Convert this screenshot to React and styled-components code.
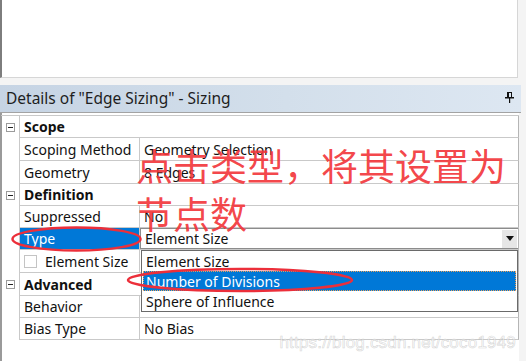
import React from "react";
import styled, { createGlobalStyle } from "styled-components";

const Global = createGlobalStyle`
  html, body { margin: 0; padding: 0; background: #f4f4f4; }
  body { font-family: "Noto Sans", "Open Sans", sans-serif; }
`;

const Page = styled.div`
  position: relative;
  width: 526px;
  height: 361px;
  overflow: hidden;
  background: #f4f4f4;
`;

const TopPane = styled.div`
  width: 515px;
  height: 77px;
  background: #fff;
  border-left: 2px solid #7d7d7d;
  border-right: 1px solid #d6d6d6;
  border-bottom: 1px solid #d6d6d6;
`;

const Gap = styled.div`
  height: 7px;
`;

const Header = styled.div`
  width: 521px;
  height: 28px;
  box-sizing: border-box;
  display: flex;
  align-items: center;
  justify-content: space-between;
  padding: 0 7px 2px 6px;
  background: linear-gradient(90deg, #c6d4e4 0%, #d3dfeb 55%, #dde7f2 100%);
  border-bottom: 1px solid #a3a3a3;
  font-size: 15.5px;
  color: #1e1e1e;
`;

const Body = styled.div`
  width: 519px;
  height: 248px;
  box-sizing: border-box;
  background: #fff;
  border-left: 2px solid #9a9a9a;
  padding-top: 2px;
`;

const Table = styled.div`
  border-top: 1px solid #c9c9c9;
  margin-left: -1px;
`;

const Row = styled.div`
  display: grid;
  grid-template-columns: 18px 120px 1fr;
  height: ${(p) => p.$h}px;
  font-size: 14px;
  color: #111;
`;

const Expander = styled.div`
  display: flex;
  align-items: center;
  padding-left: 5px;
`;

const MinusBox = styled.div`
  width: 9px;
  height: 9px;
  box-sizing: border-box;
  border: 1px solid #9b9b9b;
  display: flex;
  align-items: center;
  justify-content: center;
  &::after {
    content: "";
    width: 5px;
    height: 1px;
    background: #222;
  }
`;

const Cell = styled.div`
  display: flex;
  align-items: center;
  box-sizing: border-box;
  padding-left: 4px;
  border-left: 1px solid #c9c9c9;
  border-bottom: 1px solid #c9c9c9;
  white-space: nowrap;
  overflow: hidden;
  background: ${(p) => (p.$sel ? "#0078d7" : "#fff")};
  color: ${(p) => (p.$sel ? "#fff" : "#111")};
`;

const ValueCell = styled(Cell)`
  border-right: 1px solid #b5b5b5;
`;

const GroupCell = styled(Cell)`
  grid-column: 2 / 4;
  font-weight: 700;
  border-right: 1px solid #b5b5b5;
`;

const CheckBox = styled.span`
  width: 13px;
  height: 13px;
  box-sizing: border-box;
  border: 1px solid #c4c4c4;
  background: #fff;
  margin-right: 8px;
`;

const Combo = styled.div`
  flex: 1;
  height: 100%;
  display: flex;
  align-items: center;
  justify-content: space-between;
  box-sizing: border-box;
  border: 1px solid #8c8c8c;
  border-right: none;
  padding-left: 4px;
  margin-left: -4px;
`;

const ArrowBtn = styled.div`
  width: 15px;
  height: 18px;
  background: #e6e6e6;
  display: flex;
  align-items: center;
  justify-content: center;
  margin-right: 1px;
  &::after {
    content: "";
    border-left: 4px solid transparent;
    border-right: 4px solid transparent;
    border-top: 5px solid #111;
  }
`;

const DropList = styled.div`
  position: absolute;
  left: 141px;
  top: 250px;
  width: 377px;
  box-sizing: border-box;
  border: 1px solid #6a6a6a;
  background: #fff;
  padding: 0 1px;
  font-size: 14px;
`;

const DropItem = styled.div`
  height: 20px;
  display: flex;
  align-items: center;
  padding-left: 2px;
  box-sizing: border-box;
  color: ${(p) => (p.$active ? "#fff" : "#111")};
  background: ${(p) => (p.$active ? "#0078d7" : "#fff")};
  border: 1px dotted ${(p) => (p.$active ? "#e9a15c" : "transparent")};
`;

const Annotation = styled.div`
  position: absolute;
  left: 136px;
  top: 141px;
  font-family: "Noto Sans CJK SC", sans-serif;
  font-size: 37px;
  line-height: 48px;
  color: rgba(242, 54, 58, 0.92);
  pointer-events: none;
`;

const Overlay = styled.svg`
  position: absolute;
  left: 0;
  top: 0;
  pointer-events: none;
`;

const Watermark = styled.div`
  position: absolute;
  right: 10px;
  top: 333px;
  font-family: "Liberation Sans", sans-serif;
  font-size: 17px;
  color: rgba(255, 255, 255, 0.6);
  -webkit-text-stroke: 0.6px rgba(170, 170, 170, 0.5);
  letter-spacing: 0.2px;
`;

const Pin = () => (
  <svg width="9" height="11" viewBox="0 0 9 11">
    <rect x="2.5" y="0.5" width="4" height="5" fill="none" stroke="#111" />
    <rect x="2" y="0" width="2" height="6" fill="#111" />
    <rect x="0" y="5" width="9" height="1.5" fill="#111" />
    <rect x="4" y="6" width="1.2" height="5" fill="#111" />
  </svg>
);

const rows = [
  { g: "Scope", h: 22 },
  { n: "Scoping Method", v: "Geometry Selection", h: 23 },
  { n: "Geometry", v: "8 Edges", h: 23 },
  { g: "Definition", h: 22 },
  { n: "Suppressed", v: "No", h: 22 },
  { n: "Type", combo: "Element Size", sel: true, h: 22 },
  { n: "Element Size", check: true, v: "", h: 23 },
  { g: "Advanced", h: 23 },
  { n: "Behavior", v: "Soft", h: 22 },
  { n: "Bias Type", v: "No Bias", h: 22 },
];

export default function App() {
  return (
    <>
      <Global />
      <Page>
        <TopPane />
        <Gap />
        <Header>
          <span>Details of "Edge Sizing" - Sizing</span>
          <Pin />
        </Header>
        <Body>
          <Table>
            {rows.map((r, i) =>
              r.g ? (
                <Row key={i} $h={r.h}>
                  <Expander>
                    <MinusBox />
                  </Expander>
                  <GroupCell>{r.g}</GroupCell>
                </Row>
              ) : (
                <Row key={i} $h={r.h}>
                  <Expander />
                  <Cell $sel={r.sel}>
                    {r.check && <CheckBox />}
                    {r.n}
                  </Cell>
                  <ValueCell>
                    {r.combo ? (
                      <Combo>
                        {r.combo}
                        <ArrowBtn />
                      </Combo>
                    ) : (
                      r.v
                    )}
                  </ValueCell>
                </Row>
              )
            )}
          </Table>
        </Body>
        <DropList>
          <DropItem>Element Size</DropItem>
          <DropItem $active>Number of Divisions</DropItem>
          <DropItem>Sphere of Influence</DropItem>
        </DropList>
        <Annotation>
          点击类型，将其设置为
          <br />
          节点数
        </Annotation>
        <Overlay width="526" height="361">
          <ellipse cx="76.5" cy="239" rx="64" ry="11.5" fill="none" stroke="#ec2f3a" strokeWidth="2.5" />
          <ellipse cx="240" cy="280" rx="112" ry="11" fill="none" stroke="#ec2f3a" strokeWidth="2.5" />
        </Overlay>
        <Watermark>https://blog.csdn.net/coco1949</Watermark>
      </Page>
    </>
  );
}
